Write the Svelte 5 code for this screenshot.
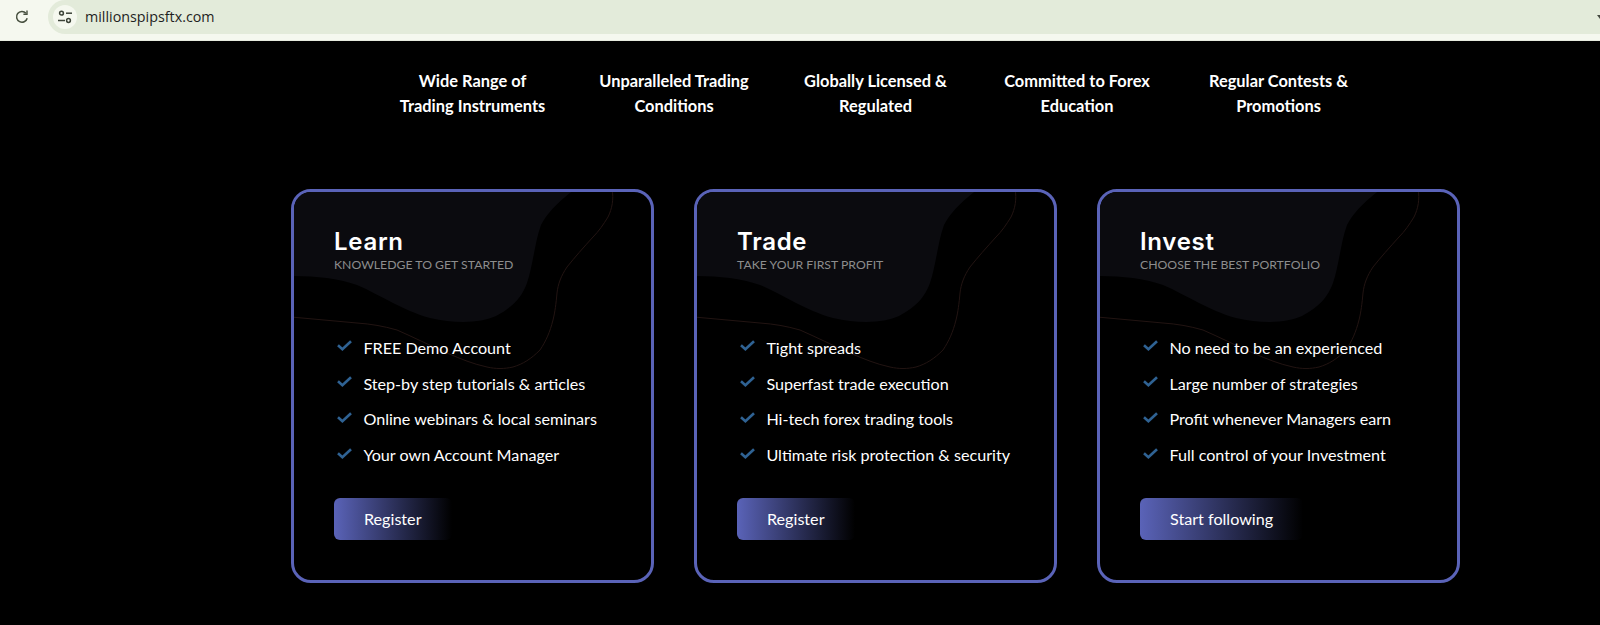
<script>
  const features = [
    ["Wide Range of", "Trading Instruments"],
    ["Unparalleled Trading", "Conditions"],
    ["Globally Licensed &", "Regulated"],
    ["Committed to Forex", "Education"],
    ["Regular Contests &", "Promotions"],
  ];

  const cards = [
    {
      title: "Learn",
      sub: "Knowledge to get started",
      items: ["FREE Demo Account", "Step-by step tutorials & articles", "Online webinars & local seminars", "Your own Account Manager"],
      action: "Register",
    },
    {
      title: "Trade",
      sub: "Take your first profit",
      items: ["Tight spreads", "Superfast trade execution", "Hi-tech forex trading tools", "Ultimate risk protection & security"],
      action: "Register",
    },
    {
      title: "Invest",
      sub: "Choose the best portfolio",
      items: ["No need to be an experienced", "Large number of strategies", "Profit whenever Managers earn", "Full control of your Investment"],
      action: "Start following",
    },
  ];
</script>

<header class="chrome">
  <svg class="reload" viewBox="0 0 16 16" width="16" height="16" fill="none" stroke="#47503f" stroke-width="1.5">
    <path d="M13.2 9.2A5.4 5.4 0 1 1 12 4.2" />
    <path d="M13 1.6v3.6H9.4" stroke-width="1.4" />
  </svg>
  <div class="omnibox">
    <span class="tune">
      <svg viewBox="0 0 16 16" width="16" height="16" fill="none" stroke="#3c4338" stroke-width="1.5">
        <circle cx="4.5" cy="4.2" r="1.9" />
        <path d="M9 4.2h6" />
        <circle cx="11.5" cy="11.5" r="1.9" />
        <path d="M1 11.5h7" />
      </svg>
    </span>
    <span class="url">millionspipsftx.com</span>
    <span class="caret"></span>
  </div>
</header>

<main>
  <section class="features">
    {#each features as lines}
      <p class="feature">{lines[0]}<br />{lines[1]}</p>
    {/each}
  </section>

  <section class="cards">
    {#each cards as card}
      <article class="card">
        <svg class="decor" viewBox="3 3 357 388" width="357" height="388" fill="none">
          <path
            fill="#0b0b0f"
            d="M0 0H284C268 12 256 24 250 36C244 52 242 76 236 94C231 108 222 118 205 127C190 134 165 135 139 129C124 125 113 119 102 114C90 108 78 101 66 96C46 89 24 87 0 87Z"
          />
          <path
            stroke="#221412"
            d="M321 0C323 10 321 20 317 28C312 36 308 42 302 48C292 59 284 68 276 78C270 87 267 95 266 104C265 115 264 123 262 131C259 143 255 152 249 161C240 170 232 175 222 178C213 180 205 180 196 178C182 175 170 170 156 164C138 156 122 148 106 141C92 137 80 135 66 134C44 132 22 130 0 128"
          />
        </svg>
        <div class="body">
          <h2>{card.title}</h2>
          <p class="sub">{card.sub}</p>
          <ul>
            {#each card.items as item}
              <li>
                <svg viewBox="0 0 15 11" width="15" height="11" fill="none" stroke="#2f6293" stroke-width="2.6">
                  <path d="M1 5.2 5.4 9.2 14 1.2" />
                </svg>
                {item}
              </li>
            {/each}
          </ul>
          <button>{card.action}</button>
        </div>
      </article>
    {/each}
  </section>
</main>

<style>
  :global(body) {
    background: #000;
  }
  .chrome {
    display: flex;
    align-items: flex-start;
    height: 40px;
    background: #f5f8ef;
    border-bottom: 1px solid #e7ebdf;
    box-sizing: content-box;
  }
  .reload {
    margin: 9px 0 0 14px;
  }
  .omnibox {
    display: flex;
    align-items: center;
    flex: 1;
    height: 34px;
    margin-left: 18px;
    padding-left: 5px;
    background: #e3ebda;
    border-radius: 17px 0 0 17px;
  }
  .tune {
    display: flex;
    align-items: center;
    justify-content: center;
    width: 24px;
    height: 24px;
    border-radius: 50%;
    background: #f5f8ef;
  }
  .url {
    margin: -1px 0 0 8px;
    font: 14.3px "Open Sans", sans-serif;
    color: #1f1f1f;
  }
  .caret {
    margin: 0 0 0 auto;
    border: 3px solid transparent;
    border-top: 4px solid #44483f;
    border-bottom: 0;
    transform: translateX(3px);
  }
  main {
    padding-left: 151px;
    font-family: Lato, sans-serif;
    color: #fff;
  }
  .features {
    display: flex;
    justify-content: center;
    padding-top: 27px;
  }
  .feature {
    width: 201.5px;
    margin: 0;
    font-size: 16.4px;
    font-weight: 700;
    line-height: 25px;
    text-align: center;
  }
  .cards {
    display: flex;
    justify-content: center;
    gap: 40px;
    margin-top: 71px;
  }
  .card {
    position: relative;
    width: 363px;
    height: 394px;
    box-sizing: border-box;
    border: 3px solid #5a63b8;
    border-radius: 20px;
    overflow: hidden;
  }
  .decor {
    position: absolute;
    top: 0;
    left: 0;
  }
  .body {
    position: relative;
    padding: 36px 40px 0;
  }
  h2 {
    margin: 0;
    font-family: Inter, sans-serif;
    font-size: 24px;
    font-weight: 600;
    line-height: 28px;
    letter-spacing: 0.7px;
  }
  .sub {
    margin: 1px 0 0;
    font-size: 12.25px;
    line-height: 16px;
    color: #8d8d8d;
    text-transform: uppercase;
  }
  ul {
    margin: 56.6px 0 0;
    padding: 0;
    list-style: none;
  }
  li {
    display: flex;
    align-items: center;
    gap: 11.4px;
    padding-left: 3px;
    height: 35.7px;
    font-size: 16.15px;
  }
  li svg {
    margin-top: -3px;
  }
  button {
    display: block;
    height: 42px;
    margin-top: 25.4px;
    padding: 0 30px;
    border: 0;
    border-radius: 6px;
    background: linear-gradient(90deg, #5a63b8 0%, #000 100%);
    color: #fff;
    font: 16.15px Lato, sans-serif;
    white-space: nowrap;
  }
</style>
